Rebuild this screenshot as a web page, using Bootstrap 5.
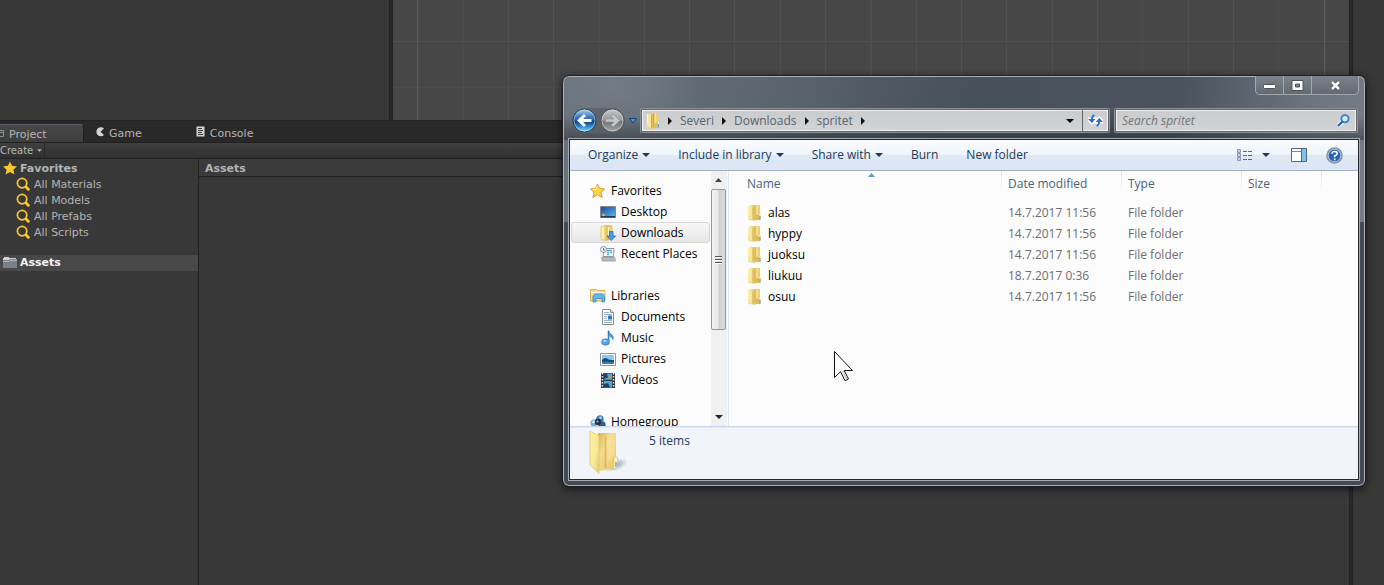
<!DOCTYPE html>
<html lang="en">
<head>
<meta charset="utf-8">
<meta name="viewport" content="width=device-width, initial-scale=1">
<title>Project – Assets</title>
<link href="https://cdn.jsdelivr.net/npm/bootstrap@5.3.0/dist/css/bootstrap.min.css" rel="stylesheet">
<style>
  body { background: #383838; color: #b4b4b4; font: 11px/16px "DejaVu Sans", sans-serif; }
  a { color: inherit; text-decoration: none; }
  button { font: inherit; color: inherit; background: none; border: 0; padding: 0; }
  svg { display: block; flex: none; }

  /* editor */
  .split { width: 4px; background: #292929; border: solid #222; border-width: 0 1px; }
  .editor-top { height: 121px; border-bottom: 1px solid #222; }
  .hierarchy { width: 389px; }
  .scene { background: #474747; }
  .inspector { width: 31px; }
  .editor-tabs { height: 21px; background: #292929; }
  .editor-tab { height: 21px; padding-top: 5px; gap: 5px; }
  .editor-tab.active { width: 84px; padding-top: 2px; background: linear-gradient(#484848, #3e3e3e); border-top: 1px solid #5a6068; border-right: 1px solid #202020; border-top-right-radius: 4px; height: 18px; align-self: flex-end; }
  .tab-console { padding-left: 50px; }
  .tool-strip { height: 17px; background: linear-gradient(#404040, #303030); border: solid #202020; border-width: 1px 0; font-size: 10px; line-height: 15px; }
  .create-btn { width: 45px; border-right: 1px solid #252525; }
  .project-tree { width: 199px; border-right: 1px solid #202020; padding-top: 2px; }
  .project-tree a { height: 16px; gap: 3px; padding-left: 3px; }
  .project-tree .tree-child { padding-left: 16px; }
  .tree-current { background: #484848; color: #f4f4f4; margin-top: 14px; }
  .path-head { height: 18px; padding-left: 6px; border-bottom: 1px solid #202020; background: #3b3b3b; line-height: 19px; }

  /* explorer window */
  .explorer { left: 562px; right: 18px; top: 75px; z-index: 5; padding: 0 6px 6px; border: 1px solid #1d2024; border-radius: 7px; color: #1e395b; font: 12px/20px "Open Sans", "Noto Sans", sans-serif;
    background: linear-gradient(transparent 40px, rgba(30,34,38,.45)) top/100% 64px no-repeat, radial-gradient(ellipse 90px 60px at 50px 10px, #737b84, transparent) no-repeat, linear-gradient(100deg, #69727b 0, #646f77 9%, #57626c 30%, #505961 38%, #47515c 50%, #4a535e 75%, #6a737d 90%, #777e87 100%) top/100% 146px no-repeat, #434c54;
    box-shadow: inset 0 0 0 1px #aab0b6, 0 2px 8px rgba(0,0,0,.6); }
  .caption-btns { height: 19px; border: 1px solid #a1a7ad; border-top: 0; border-radius: 0 0 5px 5px; background: linear-gradient(#7a828a, #626a73); }
  .caption-btns button { width: 28px; border-right: 1px solid #a1a7ad; }
  .caption-btns button:last-child { width: 46px; border: 0; }
  .address-row { margin: 13px 0 6px; height: 25px; }
  .nav-orbs { background: rgba(90,96,102,.8); border-radius: 13px; margin-left: 3px; gap: 3px; }
  .glass-field { height: 23px; border: 1px solid #5f666d; background: linear-gradient(#c9cbcc, #d2d3d4); box-shadow: inset 0 0 0 1px #f2f2f2, 0 0 0 1px #8b9299; border-radius: 1px; color: #596472; }
  .address-bar { gap: 8px; padding-left: 4px; }
  .refresh-btn { width: 26px; height: 21px; border-left: 1px solid #5f666d; }
  .search-field { width: 242px; margin-left: 6px; margin-right: 2px; padding: 0 6px; }
  .search-field input { background: none; border: 0; outline: 0; min-width: 0; color: #596472; }
  .search-field input::placeholder { color: #71767b; font-style: italic; opacity: 1; }
  .client { border: 1px solid #24282c; box-shadow: 0 0 0 1px #a7adb3; background: #fcfcfc; }
  .command-bar { height: 31px; padding: 0 15px 0 18px; background: linear-gradient(#fafcfe 0, #eef4fb 48%, #dfe8f5 52%, #dce6f4 100%); border-bottom: 1px solid #a0afc6; }
  .command-bar button { height: 30px; }
  .command-bar button + button { margin-left: 28px; }
  .command-bar .view-menu { gap: 10px; }
  .command-bar .view-btn { margin-left: 21px; }
  .command-bar .help-btn { margin-left: 19px; }
  .browse { height: 256px; border-bottom: 1px solid #ccd9ec; }
  .places { width: 141px; padding-top: 9px; color: #000; }
  .places a { height: 21px; margin: 0 1px; gap: 5px; padding-left: 18px; border: 1px solid transparent; border-radius: 3px; line-height: 19px; }
  .places a.sub { padding-left: 28px; }
  .places a.chosen { border-color: #d6d6d6; background: linear-gradient(#f8f8f8, #e6e6e6); }
  .place-gap { margin-top: 21px !important; }
  .scroller { width: 16px; background: #f0f0f0; padding-right: 1px; }
  .scroller .arrow { height: 18px; }
  .thumb { height: 141px; border: 1px solid #979797; border-radius: 2px; background: linear-gradient(90deg, #f4f4f4 0, #e8e8ea 45%, #cfcfd3 55%, #dcdcdc 100%); }
  .files { border-left: 1px solid #dce7f5; margin-left: 1px; }
  .file-grid { width: 100%; table-layout: fixed; color: #6d6d6d; }
  .file-grid th { font-weight: 400; color: #4c607a; height: 31px; vertical-align: top; padding: 3px 6px 0; background: linear-gradient(#d5e2f2, #fcfcfc) right top/1px 22px no-repeat; }
  .file-grid td { height: 21px; padding: 0 6px; line-height: 21px; }
  .file-grid tr > :first-child { padding-left: 18px; }
  .file-grid td a { color: #000; gap: 6px; }
  .sort-mark { left: 139px; top: 2px; }
  .details { height: 52px; background: #f1f4f9; padding: 4px 18px; color: #1e395b; box-shadow: inset 0 1px #e1e9f5; gap: 19px; }
  .pointer { left: 834px; top: 351px; z-index: 9; }
</style>
</head>
<body class="vh-100 overflow-hidden position-relative">
<svg width="0" height="0" class="position-absolute" aria-hidden="true">
  <defs>
    <linearGradient id="gold" x2="1"><stop stop-color="#fbf3a9"/><stop offset=".45" stop-color="#e9cd70"/><stop offset=".55" stop-color="#d9b65a"/><stop offset="1" stop-color="#f0d77c"/></linearGradient>
    <linearGradient id="flap" x2="1" y2="1"><stop stop-color="#fbf1a8"/><stop offset=".6" stop-color="#f8e896"/><stop offset="1" stop-color="#e8c667"/></linearGradient>
    <linearGradient id="back" x2="1" y2="1"><stop stop-color="#d9b450"/><stop offset=".35" stop-color="#f3dc8f"/><stop offset="1" stop-color="#e6c55f"/></linearGradient>
    <radialGradient id="shade"><stop stop-color="#70747a" stop-opacity=".7"/><stop offset="1" stop-color="#70747a" stop-opacity="0"/></radialGradient>
    <linearGradient id="orbBlue" x2="0" y2="1"><stop stop-color="#b5d7f0"/><stop offset=".3" stop-color="#4a84c4"/><stop offset=".48" stop-color="#2b5f9f"/><stop offset=".52" stop-color="#123a6b"/><stop offset=".75" stop-color="#2e86cf"/><stop offset="1" stop-color="#8fe0ff"/></linearGradient>
    <linearGradient id="orbGrey" x2="0" y2="1"><stop stop-color="#c6c8ca"/><stop offset=".48" stop-color="#97999b"/><stop offset=".53" stop-color="#717476"/><stop offset="1" stop-color="#a2a4a6"/></linearGradient>
    <linearGradient id="sky" x1="0" x2="1" y2="1"><stop stop-color="#1c4d93"/><stop offset="1" stop-color="#58b0ee"/></linearGradient>
    <symbol id="folder" viewBox="0 0 14 16"><path d="M1 1 5 0h7.500V9l.8 1v4.500L7 15.500 1 15z" fill="#ecd077"/><path d="M1 1h4.500v13.500H1z" fill="#f7e797"/><path d="M1.500 1v9" stroke="#fdf6bd"/><path d="M5.500 1.500v13M7.500.500v14" stroke="#d0a646"/><path d="M6.500 1v15" stroke="#e3c163"/><path d="M9.500.500v9" stroke="#faeaa0"/><path d="M8.500 10v5h4v-5" fill="#dfbc55"/><path d="M12.500 9v2" stroke="#fff3b8"/><path d="M12.500 11v3.500" stroke="#5aa5dc"/></symbol>
    <symbol id="lens" viewBox="0 0 16 16"><circle cx="6.500" cy="6.500" r="5" fill="none" stroke="#f7c731" stroke-width="1.900"/><path d="m10.200 10.200 3.900 3.900" stroke="#f7c731" stroke-width="3"/></symbol>
    <symbol id="down" viewBox="0 0 8 4"><path d="M0 0h8L4 4z" fill="currentColor"/></symbol>
    <symbol id="crumb" viewBox="0 0 4 8"><path d="M0 0v8l4-4z" fill="#111"/></symbol>
  </defs>
</svg>

<main class="d-flex h-100">
  <div class="flex-fill d-flex flex-column overflow-hidden">
    <section class="editor-top d-flex">
      <div class="hierarchy flex-shrink-0"></div>
      <div class="split flex-shrink-0"></div>
      <div class="scene flex-fill overflow-hidden">
        <svg width="956" height="120" fill="none" shape-rendering="crispEdges">
          <path d="M0 41.500h956M115.500 0v120M160.500 0v120M251.500 0v120M296.500 0v120M341.500 0v120M387.500 0v120M432.500 0v120M523.500 0v120M568.500 0v120M613.500 0v120M659.500 0v120M704.500 0v120M795.500 0v120M840.500 0v120" stroke="#515151"/>
          <path d="M0 87.500h956M70.500 0v120M206.500 0v120M749.500 0v120M885.500 0v120" stroke="#4c4c4c"/>
          <path d="M478 0v120" stroke="#4e4e4e" stroke-width="2"/>
          <path d="M24.500 0v120M931.500 0v120" stroke="#5c5c64"/>
        </svg>
      </div>
    </section>
    <nav class="editor-tabs d-flex" aria-label="Panels">
      <a href="#" class="editor-tab active d-flex">
        <svg width="4" height="12" viewBox="0 0 4 12"><path d="M0 3.500h3.500v6H0M0 5.500h3" fill="none" stroke="#8c8f93"/></svg>Project</a>
      <a href="#" class="editor-tab d-flex ps-2 ms-1">
        <svg width="8" height="12" viewBox="0 0 8 12"><path d="M8 2.500A4.500 4.500 0 1 0 8 9L4.500 5.800z" fill="#d2d4d6"/></svg>Game</a>
      <a href="#" class="editor-tab tab-console d-flex ms-1">
        <svg width="9" height="12" viewBox="0 0 9 12"><path d="M.5.500h8v10h-8z" fill="#d0d2d4"/><path d="M2 2.500h4M2 4.500h5M2 6.500h4M2 8.500h5" stroke="#333"/></svg>Console</a>
    </nav>
    <div class="tool-strip d-flex">
      <button type="button" class="create-btn d-flex align-items-center gap-1">Create <svg width="5" height="3"><use href="#down"/></svg></button>
    </div>
    <div class="d-flex flex-fill">
      <nav class="project-tree flex-shrink-0" aria-label="Project folders">
        <a href="#" class="d-flex fw-bold"><svg width="14" height="14" viewBox="0 0 14 14"><path d="m7 .5 2 4.300 5 .6-3.600 3.300 1 4.800L7 11.100l-4.400 2.400 1-4.800L0 5.400l5-.6z" fill="#fbc92b"/></svg>Favorites</a>
        <a href="#" class="d-flex tree-child"><svg width="15" height="15"><use href="#lens"/></svg>All Materials</a>
        <a href="#" class="d-flex tree-child"><svg width="15" height="15"><use href="#lens"/></svg>All Models</a>
        <a href="#" class="d-flex tree-child"><svg width="15" height="15"><use href="#lens"/></svg>All Prefabs</a>
        <a href="#" class="d-flex tree-child"><svg width="15" height="15"><use href="#lens"/></svg>All Scripts</a>
        <a href="#" class="d-flex tree-current fw-bold"><svg width="14" height="15" viewBox="0 0 14 15"><path d="M0 4V3h1V2h5v1h7v2H0z" fill="#cfd3d6"/><path d="M0 5h6l1-1h7v9H0z" fill="#78818a"/><path d="M0 6.500h6l1-1h7" stroke="#aeb5bb" fill="none"/></svg>Assets</a>
      </nav>
      <section class="flex-fill">
        <div class="path-head fw-bold">Assets</div>
      </section>
    </div>
  </div>
  <div class="split flex-shrink-0"></div>
  <aside class="inspector flex-shrink-0"></aside>
</main>

<section class="explorer position-absolute" aria-label="spritet">
  <div class="d-flex justify-content-end">
    <div class="caption-btns d-flex">
      <button type="button" aria-label="Minimize" class="d-flex justify-content-center align-items-end pb-1"><svg width="13" height="6"><rect x=".5" y=".5" width="12" height="4" rx="1" fill="#fff" stroke="#4b525a"/></svg></button>
      <button type="button" aria-label="Maximize" class="d-flex justify-content-center align-items-center"><svg width="13" height="11" viewBox="0 0 13 11"><path d="M1 .5h11v10H1z" fill="#fff" stroke="#4b525a"/><path d="M4.500 4h4v3h-4z" fill="#7a828a" stroke="#4b525a"/></svg></button>
      <button type="button" aria-label="Close" class="d-flex justify-content-center align-items-center"><svg width="13" height="11" viewBox="0 0 13 11"><path d="m3 2 7 7M10 2 3 9" stroke="#4b525a" stroke-width="4.400"/><path d="m3 2 7 7M10 2 3 9" stroke="#fff" stroke-width="2.600"/></svg></button>
    </div>
  </div>
  <div class="address-row d-flex align-items-center">
    <div class="nav-orbs d-flex">
      <button type="button" aria-label="Back"><svg width="25" height="25" viewBox="0 0 25 25"><circle cx="12.500" cy="12.500" r="11.500" fill="url(#orbBlue)" stroke="#2b3e55"/><circle cx="12.500" cy="12.500" r="10.500" fill="none" stroke="#b7dcf5" stroke-opacity=".6"/><path d="m5 12.500 7-6.500 2 2-3 3h8.500v3H11l3 3-2 2z" fill="#fff"/></svg></button>
      <button type="button" aria-label="Forward" disabled><svg width="25" height="25" viewBox="0 0 25 25"><circle cx="12.500" cy="12.500" r="11.500" fill="url(#orbGrey)" stroke="#515558"/><circle cx="12.500" cy="12.500" r="10.500" fill="none" stroke="#ddd" stroke-opacity=".6"/><path d="m20 12.500-7-6.500-2 2 3 3H5.500v3H14l-3 3 2 2z" fill="#c5c6c7" stroke="#8b8e90" stroke-width=".6"/></svg></button>
    </div>
    <button type="button" aria-label="Recent locations" class="px-1"><svg width="8" height="6" viewBox="0 0 8 6"><path d="M.5.500h7L4 5z" fill="#3d9be6" stroke="#163f70"/></svg></button>
    <div class="glass-field address-bar flex-fill d-flex align-items-center">
      <svg width="14" height="16"><use href="#folder"/></svg>
      <svg width="4" height="8"><use href="#crumb"/></svg>
      <a href="#">Severi</a>
      <svg width="4" height="8"><use href="#crumb"/></svg>
      <a href="#">Downloads</a>
      <svg width="4" height="8"><use href="#crumb"/></svg>
      <a href="#">spritet</a>
      <svg width="4" height="8"><use href="#crumb"/></svg>
      <button type="button" aria-label="Previous locations" class="ms-auto text-black"><svg width="8" height="4"><use href="#down"/></svg></button>
      <button type="button" aria-label="Refresh" class="refresh-btn d-flex align-items-center justify-content-center"><svg width="15" height="13" viewBox="0 0 15 13"><path d="M6.500 1Q4 2 4 5M8.500 12Q11 11 11 8M0 5h7.500L3.800 9zM7.500 8H15l-3.700-4z" fill="#fff" stroke="#fff" stroke-width="3"/><path d="M6.500 1Q4 2 4 5M8.500 12Q11 11 11 8" fill="none" stroke="#2a72c4" stroke-width="2"/><path d="M0 5h7.500L3.800 9zM7.500 8H15l-3.700-4z" fill="#2a72c4"/></svg></button>
    </div>
    <div class="glass-field search-field d-flex align-items-center">
      <input type="search" class="flex-fill p-0" placeholder="Search spritet" aria-label="Search spritet">
      <button type="button" aria-label="Search"><svg width="13" height="13" viewBox="0 0 13 13"><path d="M6 7 1.500 11.500" stroke="#fff" stroke-width="4"/><circle cx="8" cy="4.800" r="3.600" fill="#dbeaf5" stroke="#2d7fd0" stroke-width="1.800"/><path d="M5.500 7.500 1.200 11.800" stroke="#1d5fae" stroke-width="2.200"/></svg></button>
    </div>
  </div>

  <div class="client">
    <div class="command-bar d-flex align-items-center">
      <button type="button" class="d-flex align-items-center gap-1">Organize <svg width="8" height="4"><use href="#down"/></svg></button>
      <button type="button" class="d-flex align-items-center gap-1">Include in library <svg width="8" height="4"><use href="#down"/></svg></button>
      <button type="button" class="d-flex align-items-center gap-1">Share with <svg width="8" height="4"><use href="#down"/></svg></button>
      <button type="button">Burn</button>
      <button type="button">New folder</button>
      <button type="button" aria-label="Change your view" class="view-menu d-flex align-items-center ms-auto"><svg width="15" height="13" viewBox="0 0 15 13"><path d="M.5.500h3v3h-3zM.5 4.500h3v3h-3zM.5 8.500h3v3h-3z" fill="#fff" stroke="#8b97a8"/><path d="M1.500 2h1M1.500 6h1M1.500 10h1" stroke="#1d3a8a"/><path d="M6 2.500h4m1 0h4M6 6.500h4m1 0h4M6 10.500h4m1 0h4" stroke="#5c6878"/></svg><svg width="8" height="4"><use href="#down"/></svg></button>
      <button type="button" aria-label="Show the preview pane" class="view-btn"><svg width="16" height="14" viewBox="0 0 16 14"><path d="M.5.500h15v13H.5z" fill="#fff" stroke="#50688a"/><path d="M1 3.500h9" stroke="#7087a5"/><path d="M10.500 1v12" stroke="#50688a"/><path d="M11 1h4v12h-4z" fill="#7cc4ea"/></svg></button>
      <button type="button" aria-label="Help" class="help-btn"><svg width="17" height="17" viewBox="0 0 17 17"><circle cx="8.500" cy="8.500" r="7.500" fill="#2b61b5" stroke="#8b929c" stroke-width="1.600"/><circle cx="8.500" cy="8.500" r="6.300" fill="none" stroke="#dce6f2" stroke-width=".8"/><path d="M6 6.800q0-2.300 2.600-2.300T11.200 6.500Q11.200 8 8.700 9v1.200M8.700 11.400v1.800" fill="none" stroke="#fff" stroke-width="1.700"/></svg></button>
    </div>

    <div class="browse d-flex overflow-hidden">
      <nav class="places flex-shrink-0" aria-label="Places">
        <a href="#" class="d-flex align-items-center"><svg width="16" height="16" viewBox="0 0 16 16"><path d="m7.500 1 2.200 4.500 5 .5-3.700 3.400 1.200 5.100-4.700-2.700L2.800 14.500 4 9.400.5 6l4.900-.5z" fill="#fbd34b" stroke="#c98c1b" stroke-width=".8"/><path d="M7.500 2.500 6 6.200 2.300 6.700" fill="none" stroke="#fff5b5"/></svg>Favorites</a>
        <a href="#" class="d-flex align-items-center sub"><svg width="16" height="16" viewBox="0 0 16 16"><path d="M.5 2.500h15v11H.5z" fill="#9aa5b2" stroke="#7d8996"/><path d="M1 3h14v9H1z" fill="url(#sky)"/><path d="M1 12h14v1.500H1z" fill="#1b3763"/><circle cx="3.500" cy="11" r="1.300" fill="#f1b63c"/></svg>Desktop</a>
        <a href="#" class="d-flex align-items-center sub chosen"><svg width="16" height="16" viewBox="0 0 16 16"><path d="M1 1.500 5 .5h7V14l-6 1.500-5-1z" fill="url(#gold)" stroke="#d8b456" stroke-width=".6"/><path d="M3 2v12M8.500 2v10" stroke="#fff5bd" stroke-width="1.500"/><path d="M9.500 6.500h3.500v4.500h2.500l-4.200 4.500L7 11h2.500z" fill="#4e9be5" stroke="#2468b2" stroke-width=".8"/></svg>Downloads</a>
        <a href="#" class="d-flex align-items-center sub"><svg width="16" height="16" viewBox="0 0 16 16"><path d="M4 2.500h10l-.5 8H3z" fill="#f3f7fa" stroke="#8e989f"/><path d="M7 4.500h5M7 6.500h2m1 0h2M7 8.500h2" stroke="#61a9d9" stroke-width="1.400"/><path d="M1.500 11.500h13l1 3.500H2.500z" fill="#b6bcc0" stroke="#8e979d" stroke-width=".8"/><circle cx="3.500" cy="3.500" r="3" fill="#e8f1f4" stroke="#8e989f"/><path d="M3.500 2v2H5" stroke="#555" fill="none" stroke-width=".8"/></svg>Recent Places</a>
        <a href="#" class="d-flex align-items-center place-gap"><svg width="16" height="16" viewBox="0 0 16 16"><path d="M.5 3V1.500h6l1 1H15V13H.5z" fill="#f5dc83" stroke="#cfa442" stroke-width=".8"/><path d="M1 4.500h14" stroke="#fffbe0"/><path d="M3 8.500 4.500 6h8L14.500 8.500V14H12v-3.500H6V14H3z" fill="#67b7ec" stroke="#3a86c4" stroke-width=".8"/></svg>Libraries</a>
        <a href="#" class="d-flex align-items-center sub"><svg width="16" height="16" viewBox="0 0 16 16"><path d="M2.500.500h8l3 3v12h-11z" fill="#fff" stroke="#858d96"/><path d="M10.500.500v3h3" fill="#dde3e9" stroke="#858d96"/><path d="M4 3.500h5M4 5.500h8M4 7.500h3M4 9.500h3M4 11.500h8M4 13.500h8" stroke="#9bb0c7"/><path d="M8 6.500h4v4H8z" fill="#2c7db9"/></svg>Documents</a>
        <a href="#" class="d-flex align-items-center sub"><svg width="16" height="16" viewBox="0 0 16 16"><path d="M8.500 1v11" stroke="#3482c8" stroke-width="1.600"/><path d="M8.500.500q.5 2.500 3 4t1.500 5q-1-3-4.500-4z" fill="#4c9ee0" stroke="#2b70b4" stroke-width=".6"/><ellipse cx="5.500" cy="12" rx="3.900" ry="3.200" fill="#4fa3e4" stroke="#2b70b4" stroke-width=".6"/><ellipse cx="4.700" cy="11" rx="1.600" ry="1" fill="#b5dcf6"/></svg>Music</a>
        <a href="#" class="d-flex align-items-center sub"><svg width="16" height="16" viewBox="0 0 16 16"><path d="M.5 2.500h15v12H.5z" fill="#fff" stroke="#8f9498"/><path d="M2 4h12v9H2z" fill="#89c9ee"/><path d="M2 9q3-3 5-1.500T14 9v4H2z" fill="#174a79"/><path d="M2 10.500q6 0 12 .5v2H2z" fill="#347eb5"/></svg>Pictures</a>
        <a href="#" class="d-flex align-items-center sub"><svg width="16" height="16" viewBox="0 0 16 16"><path d="M1 1h14v15H1z" fill="#333a42"/><path d="M2.500 1v15M13.500 1v15" stroke="#e8e8e8" stroke-width="1.400" stroke-dasharray="1.500 1.500"/><path d="M4 1.500h8v6.300H4zM4 9h8v6.500H4z" fill="#4ea7df"/><path d="M4 1.500h3l1 4-4 1.500zM4 12l4-1 2 4.500H4z" fill="#1c456e"/><path d="m8 6 3-3 1 1-2 3z" fill="#f08a3c"/></svg>Videos</a>
        <a href="#" class="d-flex align-items-center place-gap"><svg width="16" height="16" viewBox="0 0 16 16"><circle cx="10" cy="5" r="3.700" fill="#3e7fc4"/><circle cx="4" cy="9" r="3.600" fill="#75add8"/><circle cx="12" cy="11" r="3.700" fill="#2b5d9c"/><circle cx="8" cy="8" r="3.200" fill="#29323d"/><circle cx="10.500" cy="3.700" r="1.300" fill="#b9dbf4"/><circle cx="3.500" cy="8" r="1.300" fill="#e2f2fc"/><circle cx="7.500" cy="7.500" r="1" fill="#bcd"/></svg>Homegroup</a>
      </nav>
      <div class="scroller d-flex flex-column flex-shrink-0" aria-hidden="true">
        <div class="arrow d-flex align-items-center justify-content-center"><svg width="7" height="4" viewBox="0 0 7 4"><path d="M0 4h7L3.500 0z" fill="#444"/></svg></div>
        <div class="thumb d-flex align-items-center justify-content-center"><svg width="7" height="8" viewBox="0 0 7 8"><path d="M0 .5h7M0 3.500h7M0 6.500h7" stroke="#555"/><path d="M0 1.500h7M0 4.500h7M0 7.500h7" stroke="#fff"/></svg></div>
        <div class="arrow d-flex align-items-center justify-content-center mt-auto"><svg width="8" height="4" class="text-dark"><use href="#down"/></svg></div>
      </div>
      <div class="files flex-fill position-relative">
        <svg class="sort-mark position-absolute" width="7" height="4" viewBox="0 0 7 4"><path d="M0 4h7L3.500 0z" fill="#5a9bc4"/></svg>
        <table class="file-grid">
          <colgroup><col><col style="width:120px"><col style="width:120px"><col style="width:80px"><col style="width:36px"></colgroup>
          <thead><tr><th scope="col">Name</th><th scope="col">Date modified</th><th scope="col">Type</th><th scope="col">Size</th><td></td></tr></thead>
          <tbody>
            <tr><td><a href="#" class="d-flex align-items-center"><svg width="15" height="16"><use href="#folder"/></svg>alas</a></td><td>14.7.2017 11:56</td><td>File folder</td><td></td><td></td></tr>
            <tr><td><a href="#" class="d-flex align-items-center"><svg width="15" height="16"><use href="#folder"/></svg>hyppy</a></td><td>14.7.2017 11:56</td><td>File folder</td><td></td><td></td></tr>
            <tr><td><a href="#" class="d-flex align-items-center"><svg width="15" height="16"><use href="#folder"/></svg>juoksu</a></td><td>14.7.2017 11:56</td><td>File folder</td><td></td><td></td></tr>
            <tr><td><a href="#" class="d-flex align-items-center"><svg width="15" height="16"><use href="#folder"/></svg>liukuu</a></td><td>18.7.2017 0:36</td><td>File folder</td><td></td><td></td></tr>
            <tr><td><a href="#" class="d-flex align-items-center"><svg width="15" height="16"><use href="#folder"/></svg>osuu</a></td><td>14.7.2017 11:56</td><td>File folder</td><td></td><td></td></tr>
          </tbody>
        </table>
      </div>
    </div>

    <footer class="details d-flex">
      <svg width="42" height="44" viewBox="0 0 42 44"><ellipse cx="27" cy="34" rx="13" ry="6" fill="url(#shade)" transform="rotate(-18 27 34)"/><path d="M10 2h18v24l2 2v8l-19 4z" fill="url(#back)"/><path d="M17.500 5v32" stroke="#dcb957" stroke-width="1.500"/><path d="M19 4h8v20l-8 8z" fill="#f7e4a0" opacity=".6"/><path d="m2 0 9 5v37.500L2 34z" fill="url(#flap)" stroke="#e0c268" stroke-width=".7"/><path d="M26 26h3.500v10.500L26 38z" fill="#fdf3c0" stroke="#e0bf5d" stroke-width=".6"/><path d="M28 31v5" stroke="#4c9cdb" stroke-width="1.300"/></svg>
      <span>5 items</span>
    </footer>
  </div>
</section>

<svg class="pointer position-absolute" width="20" height="31" viewBox="0 0 20 31" aria-hidden="true"><path d="M.5.500v26l6-5.800 4.500 9 3.500-1.700-4.300-8.500h8.300z" fill="#fff" stroke="#111"/><path d="m8 20.500 4 8 1.500-.8-4-8z" fill="#ccc"/></svg>

<script src="https://cdn.jsdelivr.net/npm/bootstrap@5.3.0/dist/js/bootstrap.bundle.min.js"></script>
</body>
</html>
